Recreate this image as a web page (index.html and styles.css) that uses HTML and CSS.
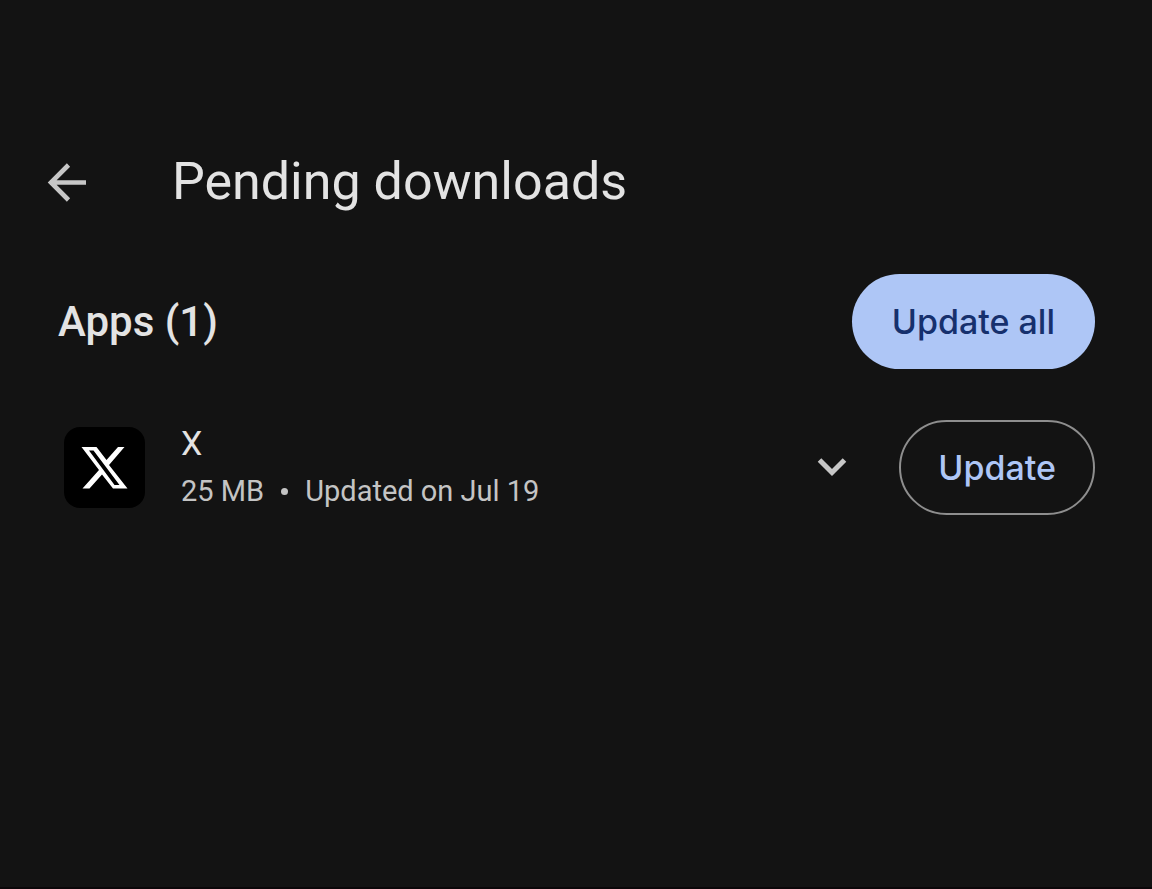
FILE: index.html
```html
<!DOCTYPE html>
<html lang="en">
<head>
    <meta charset="UTF-8">
    <meta name="viewport" content="width=device-width, initial-scale=1.0">
    <title>Pending downloads</title>
    <link rel="stylesheet" href="styles.css">
</head>
<body>
    <header class="top-bar">
        <button type="button" class="icon-btn" aria-label="Back">
            <svg width="40" height="40" viewBox="0 0 40 40" fill="none" stroke="currentColor" stroke-width="4.6">
                <path d="M40 20.500H5M22.500 3L5 20.500L22.500 38"/>
            </svg>
        </button>
        <h1>Pending downloads</h1>
    </header>

    <main>
        <div class="section-header">
            <h2>Apps (1)</h2>
            <button type="button" class="btn btn-filled">Update all</button>
        </div>

        <ul class="app-list">
            <li class="app">
                <svg class="app-icon" viewBox="0 0 81 81" aria-hidden="true">
                    <rect width="81" height="81" rx="16" fill="#000"/>
                    <path d="M54 20H60.500L45 38L63.500 61.500H49L38 47.500L25.500 61.500H18.500L35 43L17.500 20H32.500L42.500 33ZM50.500 58H55.500L29.500 23.500H25Z" fill="#fff" fill-rule="evenodd"/>
                </svg>
                <div class="app-info">
                    <div class="app-name">X</div>
                    <div class="app-meta">
                        <span>25 MB</span>
                        <span class="dot"></span>
                        <span>Updated on Jul 19</span>
                    </div>
                </div>
                <button type="button" class="icon-btn" aria-label="Show details">
                    <svg width="30" height="20" viewBox="0 0 30 20" fill="none" stroke="currentColor" stroke-width="5">
                        <path d="M2.500 3L15 15.500L27.500 3"/>
                    </svg>
                </button>
                <button type="button" class="btn btn-outlined">Update</button>
            </li>
        </ul>
    </main>
</body>
</html>
```
FILE: styles.css
```css
* {
    margin: 0;
    padding: 0;
    box-sizing: border-box;
}

body {
    min-height: 100vh;
    padding: 152px 57px 0 58px;
    border-bottom: 2px solid #0b0709;
    background-color: #131313;
    color: #e3e3e3;
    font-family: "Roboto", sans-serif;
}

button {
    font-family: inherit;
    cursor: pointer;
}

.top-bar {
    display: flex;
    align-items: center;
    gap: 86px;
    height: 60px;
    margin-left: -12px;
}

h1 {
    font-size: 52px;
    font-weight: 400;
    line-height: 60px;
}

.icon-btn {
    display: flex;
    border: none;
    background: none;
    color: #c7c7c7;
}

.section-header {
    display: flex;
    justify-content: space-between;
    align-items: center;
    margin-top: 62px;
}

h2 {
    font-size: 42px;
    font-weight: 500;
    line-height: 52px;
}

.btn {
    height: 95px;
    border: none;
    border-radius: 48px;
    font-family: "Inter", "Roboto", sans-serif;
    font-size: 34px;
    font-weight: 500;
}

.btn-filled {
    padding: 0 40px;
    background-color: #aec6f6;
    color: #16306d;
}

.btn-outlined {
    margin-left: 52px;
    padding: 0 37px;
    border: 2px solid #8e8e8e;
    background: none;
    color: #aec6f6;
}

.app-list {
    list-style: none;
}

.app {
    display: flex;
    align-items: center;
    margin-top: 50px;
    padding-left: 6px;
}

.app-icon {
    width: 81px;
    height: 81px;
}

.app-info {
    flex: 1;
    margin-left: 36px;
}

.app-name {
    font-size: 34px;
    line-height: 48px;
}

.app-meta {
    display: flex;
    align-items: center;
    color: #c4c4c4;
    font-size: 29px;
    line-height: 48px;
}

.dot {
    width: 7px;
    height: 7px;
    margin: 0 17px;
    border-radius: 50%;
    background-color: #c4c4c4;
}
```
